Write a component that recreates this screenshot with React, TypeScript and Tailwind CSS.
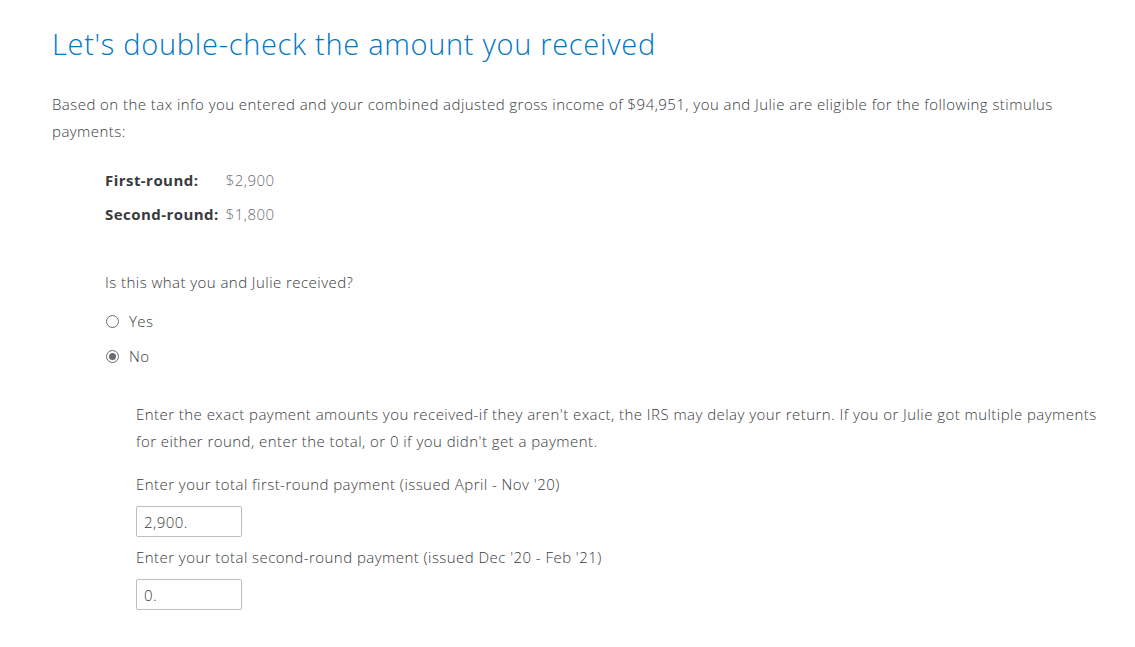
import React from 'react';

const font = { fontFamily: '"Open Sans", Lato, sans-serif' };

const Radio = ({ checked, label }: { checked?: boolean; label: string }) => (
  <label className="flex items-center h-[24px] text-[15px] tracking-[0.45px] font-light text-[#393a3d]">
    <span className="w-[13px] h-[13px] rounded-full border border-[#6b6c72] flex items-center justify-center ml-[1px] mr-[10px]">
      {checked && <span className="w-[7px] h-[7px] rounded-full bg-[#6b6c72]" />}
    </span>
    {label}
  </label>
);

const AmountInput = ({ value }: { value: string }) => (
  <input
    readOnly
    value={value}
    className="w-[106px] h-[31px] border border-[#babec5] rounded-[2px] px-[7px] text-[15px] tracking-[0.45px] font-light text-[#393a3d] outline-none"
  />
);

export default function App() {
  return (
    <div className="bg-white min-h-screen pl-[52px] pr-[35px] pt-[26px]" style={font}>
      <h1 className="text-[29px] leading-[36px] tracking-[0.7px] text-[#0077c5] font-light">
        Let's double-check the amount you received
      </h1>

      <p className="mt-[29px] text-[15px] leading-[27px] tracking-[0.45px] font-light text-[#393a3d]">
        Based on the tax info you entered and your combined adjusted gross income of $94,951, you and Julie are eligible for the following stimulus payments:
      </p>

      {/* payment summary */}
      <div className="mt-[18px] ml-[53px] grid grid-cols-[auto_auto] justify-start gap-x-[7px] text-[15px] tracking-[0.45px] leading-[34px]">
        <span className="font-bold text-[#393a3d]">First-round:</span>
        <span className="font-light text-[#6b6c72]">$2,900</span>
        <span className="font-bold text-[#393a3d]">Second-round:</span>
        <span className="font-light text-[#6b6c72]">$1,800</span>
      </div>

      <div className="ml-[53px] mt-[39px]">
        <p className="text-[15px] leading-[24px] tracking-[0.45px] font-light text-[#393a3d]">Is this what you and Julie received?</p>
        <div className="mt-[15px] flex flex-col gap-[11px]">
          <Radio label="Yes" />
          <Radio label="No" checked />
        </div>

        <div className="ml-[31px] mt-[33px]">
          <p className="text-[15px] leading-[27px] tracking-[0.45px] font-light text-[#393a3d]">
            Enter the exact payment amounts you received-if they aren't exact, the IRS may delay your return. If you or Julie got multiple payments for either round, enter the total, or 0 if you didn't get a payment.
          </p>
          <p className="mt-[17px] text-[15px] leading-[24px] tracking-[0.45px] font-light text-[#393a3d]">
            Enter your total first-round payment (issued April - Nov '20)
          </p>
          <div className="mt-[10px]">
            <AmountInput value="2,900." />
          </div>
          <p className="mt-[8px] text-[15px] leading-[24px] tracking-[0.45px] font-light text-[#393a3d]">
            Enter your total second-round payment (issued Dec '20 - Feb '21)
          </p>
          <div className="mt-[10px]">
            <AmountInput value="0." />
          </div>
        </div>
      </div>
    </div>
  );
}
